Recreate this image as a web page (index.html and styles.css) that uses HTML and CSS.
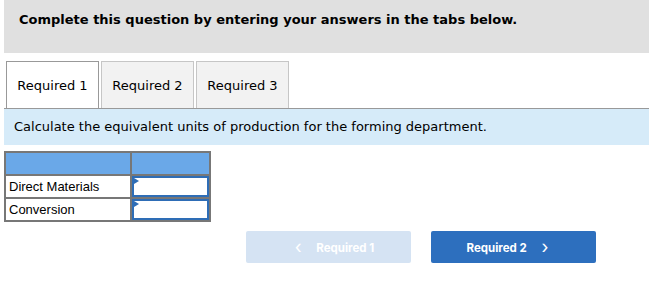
FILE: index.html
```html
<!DOCTYPE html>
<html>

<head>
    <link rel="stylesheet" href="styles.css">
</head>

<body>
    <div class="intro">
        <p>Complete this question by entering your answers in the tabs below.</p>
    </div>

    <div class="tabs">
        <div class="tab active">Required 1</div>
        <div class="tab">Required 2</div>
        <div class="tab">Required 3</div>
    </div>

    <div class="instructions">
        Calculate the equivalent units of production for the forming department.
    </div>

    <table class="answer-table">
        <tr class="head-row">
            <th class="label-col"></th>
            <th class="input-col"></th>
        </tr>
        <tr>
            <td class="label-col">Direct Materials</td>
            <td class="input-col answer-cell"><input type="text"></td>
        </tr>
        <tr>
            <td class="label-col">Conversion</td>
            <td class="input-col answer-cell"><input type="text"></td>
        </tr>
    </table>

    <div class="nav">
        <button class="nav-btn prev" disabled><span class="arrow">&lsaquo;</span> Required 1</button>
        <button class="nav-btn next">Required 2 <span class="arrow">&rsaquo;</span></button>
    </div>
</body>

</html>
```

FILE: styles.css
```css
body {
    margin: 0;
    padding: 0 0 0 4px;
    font-family: "DejaVu Sans", Verdana, sans-serif;
    color: #000;
}

.intro {
    background-color: #e0e0e0;
    height: 53px;
    padding: 0 0 0 15px;
    box-sizing: border-box;
}

.intro p {
    margin: 0;
    padding-top: 12px;
    font-size: 13px;
    font-weight: bold;
}

.tabs {
    display: flex;
    gap: 2px;
    margin-top: 8px;
    padding-left: 2px;
    border-bottom: 1px solid #999;
}

.tab {
    width: 93px;
    height: 47px;
    box-sizing: border-box;
    border: 1px solid #c6c6c6;
    border-bottom: none;
    background-color: #f2f2f2;
    font-size: 13px;
    line-height: 47px;
    text-align: center;
}

.tab.active {
    background-color: #fff;
    border-color: #999;
}

.instructions {
    background-color: #d6ebf9;
    height: 36px;
    line-height: 36px;
    padding-left: 10px;
    font-size: 13px;
}

.answer-table {
    margin-top: 6px;
    border-collapse: collapse;
    font-family: "Liberation Sans", Arial, sans-serif;
    font-size: 13px;
}

.answer-table th,
.answer-table td {
    border: 2px solid #777;
    padding: 0;
}

.head-row th {
    background-color: #6aa8e8;
    height: 21px;
}

.answer-table td {
    height: 21px;
}

.label-col {
    width: 121px;
    padding-left: 3px !important;
    text-align: left;
}

.input-col {
    width: 77px;
}

.answer-cell {
    position: relative;
}

.answer-cell input {
    display: block;
    width: 100%;
    height: 21px;
    box-sizing: border-box;
    border: 2px solid #2e6db6;
    margin: 0;
    padding: 0 4px;
    font-size: 12px;
}

.answer-cell::before {
    content: "";
    position: absolute;
    left: 2px;
    top: 2px;
    border-left: 5px solid #2e6db6;
    border-top: 3px solid transparent;
    border-bottom: 3px solid transparent;
}

.nav {
    display: flex;
    gap: 20px;
    margin: 9px 0 0 242px;
}

.nav-btn {
    width: 165px;
    height: 32px;
    border: none;
    border-radius: 2px;
    color: #fff;
    font-family: Inter, "Liberation Sans", sans-serif;
    font-size: 11.5px;
    font-weight: bold;
    line-height: 30px;
}

.nav-btn.prev {
    background-color: #d5e3f3;
}

.nav-btn.next {
    background-color: #2d6fbe;
}

.arrow {
    font-size: 18px;
    font-weight: normal;
    margin: 0 12px;
    vertical-align: -1px;
}
```
